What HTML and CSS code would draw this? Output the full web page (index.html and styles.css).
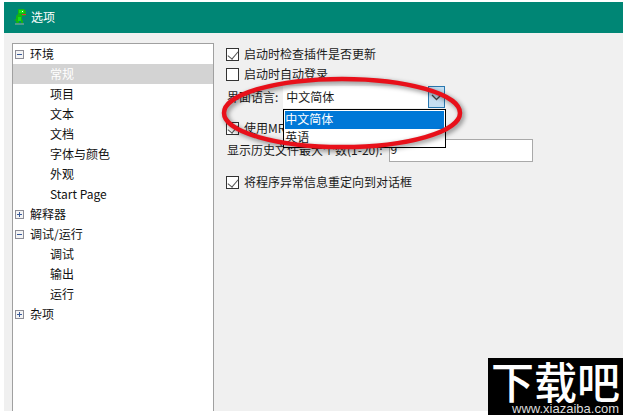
FILE: index.html
```html
<!DOCTYPE html>
<html>
<head>
	<meta charset="utf-8">
	<title>选项</title>
	<link rel="stylesheet" href="styles.css">
</head>
<body>
	<div class="window">
		<div class="titlebar">
			<svg class="appicon" width="14" height="16" viewBox="0 0 14 16">
				<path fill="#14b414" d="M5 0h6l2 2v3l-1 2H9v3l1 2v2H8v-2H6v2H3v-2L1 11l2-1V7l2-2z"/>
				<path fill="#16e016" d="M6 1h5v3H6zM5 8h3v4H5z"/>
				<path fill="#e8283c" d="M9 5h4v1H9z"/>
				<path fill="#fff" d="M9 2h1v1H9z"/>
				<path fill="#4f9a8c" d="M2 14h9v2H2z"/>
			</svg>
			<span>选项</span>
		</div>
		<div class="main">
			<div class="tree">
				<div class="row"><i class="toggle minus"></i>环境</div>
				<div class="row child selected">常规</div>
				<div class="row child">项目</div>
				<div class="row child">文本</div>
				<div class="row child">文档</div>
				<div class="row child">字体与颜色</div>
				<div class="row child">外观</div>
				<div class="row child">Start Page</div>
				<div class="row"><i class="toggle plus"></i>解释器</div>
				<div class="row"><i class="toggle minus"></i>调试/运行</div>
				<div class="row child">调试</div>
				<div class="row child">输出</div>
				<div class="row child">运行</div>
				<div class="row"><i class="toggle plus"></i>杂项</div>
			</div>
			<div class="settings">
				<label class="check"><i class="box on"></i>启动时检查插件是否更新</label>
				<label class="check"><i class="box"></i>启动时自动登录</label>
				<div class="langrow">
					<span class="lbl">界面语言:</span>
					<div class="combo">
						<span class="combo-text">中文简体</span>
						<span class="combo-btn">
							<svg width="11" height="7" viewBox="0 0 11 7"><path d="M1 1l4.5 4.5L10 1" fill="none" stroke="#444" stroke-width="1.3"/></svg>
						</span>
						<div class="dropdown">
							<div class="opt active">中文简体</div>
							<div class="opt">英语</div>
						</div>
					</div>
				</div>
				<label class="check mru"><i class="box on"></i>使用MRU</label>
				<div class="histrow">
					<span class="lbl">显示历史文件最大个数(1-20):</span>
					<div class="numfield">9</div>
				</div>
				<label class="check last"><i class="box on"></i>将程序异常信息重定向到对话框</label>
			</div>
		</div>
	</div>
	<svg class="ring" width="623" height="415" viewBox="0 0 623 415">
		<ellipse class="ring-shadow" cx="344" cy="115" rx="118" ry="34"/>
		<ellipse class="ring-line" cx="342" cy="113" rx="118" ry="34"/>
	</svg>
	<div class="logo">
		<div class="logo-name">下载吧</div>
		<div class="logo-url">www.xiazaiba.com</div>
	</div>
</body>
</html>
```

FILE: styles.css
```css
* {
	box-sizing: border-box;
}
html, body {
	height: 100%;
}
body {
	margin: 0;
	padding: 2px 0 4px 4px;
	background: #fff;
	color: #1a1a1a;
	font-size: 12px;
	font-family: "Noto Sans CJK SC", "Liberation Sans", sans-serif;
	overflow: hidden;
}
.window {
	height: 100%;
	display: flex;
	flex-direction: column;
	background: #f0f0f0;
}
.titlebar {
	height: 31px;
	flex: none;
	display: flex;
	align-items: center;
	gap: 4px;
	padding: 0 0 2px 9px;
	background: #008675;
	color: #fff;
}
.main {
	flex: 1;
	display: flex;
	padding-top: 10px;
	min-height: 0;
}
.tree {
	width: 202px;
	margin-left: 8px;
	background: #fff;
	border: 1px solid #a0a0a0;
	border-bottom: none;
}
.row {
	height: 20px;
	padding: 0 0 2px 2px;
	display: flex;
	align-items: center;
	color: #111;
}
.row.child {
	padding-left: 37px;
}
.row.selected {
	background: #d3d3d3;
	color: #fff;
}
.toggle {
	position: relative;
	width: 9px;
	height: 9px;
	margin: 2px 6px 0 0;
	border: 1px solid #8c8c96;
	background: #f4f4f4;
}
.toggle:before {
	content: "";
	position: absolute;
	left: 1px;
	top: 3px;
	width: 5px;
	height: 1px;
	background: #3a5a9a;
}
.plus:after {
	content: "";
	position: absolute;
	left: 3px;
	top: 1px;
	width: 1px;
	height: 5px;
	background: #3a5a9a;
}
.settings {
	flex: 1;
	padding: 1px 0 0 12px;
}
.check {
	display: flex;
	align-items: center;
	height: 20px;
	padding-bottom: 2px;
	gap: 5px;
}
.box {
	position: relative;
	width: 13px;
	height: 13px;
	margin-top: 2px;
	border: 1px solid #333;
	background: #fff;
}
.box.on:after {
	content: "";
	position: absolute;
	left: 3px;
	top: 0;
	width: 5px;
	height: 9px;
	border: solid #555;
	border-width: 0 1px 1px 0;
	transform: rotate(40deg);
}
.lbl {
	margin-bottom: 2px;
}
.langrow {
	display: flex;
	align-items: center;
	height: 22px;
	margin-top: 2px;
	padding-left: 1px;
}
.combo {
	position: relative;
	width: 162px;
	height: 22px;
	margin-left: 5px;
	display: flex;
	align-items: center;
	justify-content: space-between;
	background: #fff;
}
.combo-text {
	padding: 0 0 2px 3px;
}
.combo-btn {
	width: 17px;
	height: 22px;
	display: flex;
	align-items: center;
	justify-content: center;
	background: #c5dff2;
	border: 1px solid #2a78b0;
}
.dropdown {
	position: absolute;
	left: 0;
	top: 23px;
	width: 163px;
	height: 39px;
	background: #fff;
	border: 1px solid #000;
	padding: 1px;
	z-index: 2;
}
.opt {
	height: 18px;
	line-height: 16px;
}
.opt.active {
	background: #0078d7;
	color: #fff;
}
.check.mru {
	margin-top: 10px;
}
.histrow {
	display: flex;
	align-items: center;
	height: 23px;
	margin-top: 1px;
	padding-left: 1px;
}
.numfield {
	width: 144px;
	height: 23px;
	margin-left: 6px;
	padding-left: 1px;
	line-height: 18px;
	background: #fff;
	border: 1px solid #a9a9a9;
}
.check.last {
	margin-top: 10px;
}
.ring {
	position: absolute;
	left: 0;
	top: 0;
	z-index: 3;
	pointer-events: none;
}
.ring-shadow {
	fill: none;
	stroke: rgba(0, 0, 0, 0.35);
	stroke-width: 6;
	filter: blur(2px);
}
.ring-line {
	fill: none;
	stroke: #e8101a;
	stroke-width: 4.5;
}
.logo {
	position: absolute;
	left: 488px;
	top: 358px;
	width: 135px;
	height: 57px;
	display: flex;
	flex-direction: column;
	background: #000;
	color: #fff;
	z-index: 4;
}
.logo-name {
	height: 44px;
	line-height: 44px;
	padding-left: 3px;
	font-size: 43px;
	font-weight: 500;
	white-space: nowrap;
}
.logo-url {
	height: 13px;
	padding-right: 4px;
	text-align: right;
	font-size: 13px;
	line-height: 13px;
	color: #ddd;
	font-family: "Liberation Sans", sans-serif;
}
```
